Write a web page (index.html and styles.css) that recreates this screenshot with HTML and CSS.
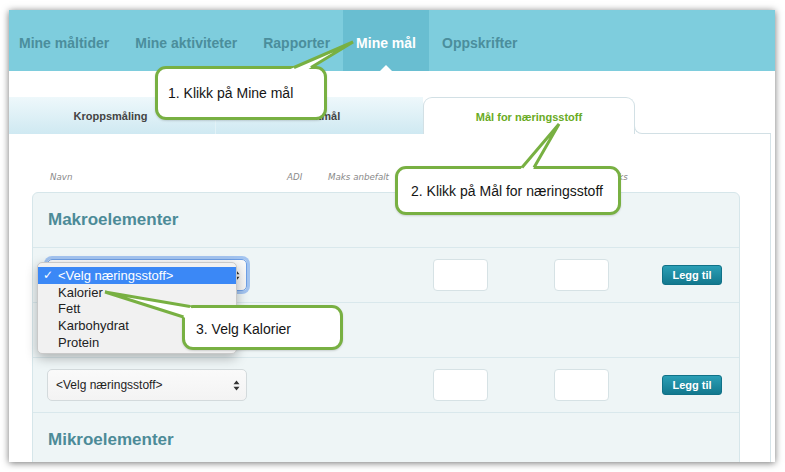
FILE: index.html
```html
<!DOCTYPE html>
<html lang="no">
<head>
<meta charset="utf-8">
<title>Mine mål – Mål for næringsstoff</title>
<link rel="stylesheet" href="styles.css">
</head>
<body>
<div class="window">
  <nav class="topnav">
    <a class="nav-item first">Mine måltider</a>
    <a class="nav-item">Mine aktiviteter</a>
    <a class="nav-item">Rapporter</a>
    <a class="nav-item active">Mine mål</a>
    <a class="nav-item">Oppskrifter</a>
  </nav>

  <div class="tabs">
    <div class="tab tab-first">Kroppsmåling</div>
    <div class="tab tab-second">Vektmål</div>
    <div class="tab tab-active">Mål for næringsstoff</div>
    <div class="tab-rest"></div>
  </div>

  <div class="content">
    <div class="col-heads">
      <span class="ch ch-name">Navn</span>
      <span class="ch ch-adi">ADI</span>
      <span class="ch ch-maxrec">Maks anbefalt</span>
      <span class="ch ch-min">Min</span>
      <span class="ch ch-max">Maks</span>
    </div>

    <div class="panel">
      <h2 class="group-title">Makroelementer</h2>

      <div class="row">
        <div class="picker focused">
          <span class="picker-label">&lt;Velg næringsstoff&gt;</span>
          <svg class="picker-arrows" width="7" height="11" viewBox="0 0 7 11"><path d="M3.5 0.5 L6.5 4.3 H0.5 Z M3.5 10.5 L6.5 6.7 H0.5 Z" fill="#333"/></svg>
        </div>
        <div class="num num-min"></div>
        <div class="num num-max"></div>
        <button class="add">Legg til</button>
      </div>

      <div class="row"></div>

      <div class="row">
        <div class="picker">
          <span class="picker-label">&lt;Velg næringsstoff&gt;</span>
          <svg class="picker-arrows" width="7" height="11" viewBox="0 0 7 11"><path d="M3.5 0.5 L6.5 4.3 H0.5 Z M3.5 10.5 L6.5 6.7 H0.5 Z" fill="#333"/></svg>
        </div>
        <div class="num num-min"></div>
        <div class="num num-max"></div>
        <button class="add">Legg til</button>
      </div>

      <h2 class="group-title group-next">Mikroelementer</h2>
    </div>
  </div>
</div>

<ul class="dropdown">
  <li class="option selected"><span class="check">✓</span><span class="opt-label">&lt;Velg næringsstoff&gt;</span></li>
  <li class="option"><span class="opt-label">Kalorier</span></li>
  <li class="option"><span class="opt-label">Fett</span></li>
  <li class="option"><span class="opt-label">Karbohydrat</span></li>
  <li class="option"><span class="opt-label">Protein</span></li>
</ul>

<div class="callout callout-1">1. Klikk på Mine mål</div>
<div class="callout callout-2">2. Klikk på Mål for næringsstoff</div>
<div class="callout callout-3">3. Velg Kalorier</div>

<svg class="tails" width="785" height="472" viewBox="0 0 785 472">
  <!-- pointer of step 1 -->
  <polygon points="353,42 285.9,71 305.2,71" fill="#fff"/>
  <polyline points="294,67.5 353,42 311,67.5" fill="none" stroke="#78b042" stroke-width="3" stroke-linejoin="miter"/>
  <!-- pointer of step 2 -->
  <polygon points="559,124 519,171 532,171" fill="#fff"/>
  <polyline points="522,167.5 559,124 534,167.5" fill="none" stroke="#78b042" stroke-width="3" stroke-linejoin="miter"/>
  <!-- pointer of step 3 -->
  <polygon points="105,292 190,306.5 195,312 189,320 183.5,317" fill="#fff"/>
  <polyline points="190,306.5 105,292 183.5,317" fill="none" stroke="#78b042" stroke-width="3" stroke-linejoin="miter"/>
</svg>
</body>
</html>
```

FILE: styles.css
```css
* {
  box-sizing: border-box;
}

html, body {
  margin: 0;
  padding: 0;
  background: #ffffff;
}

body {
  position: relative;
  width: 785px;
  height: 472px;
  overflow: hidden;
  font-family: "Liberation Sans", Arial, sans-serif;
}

/* framed browser window */
.window {
  margin: 10px 0 0 9px;
  width: 766px;
  height: 452px;
  overflow: hidden;
  background: #ffffff;
  box-shadow: 0 1px 7px rgba(0, 0, 0, 0.55);
  display: flex;
  flex-direction: column;
}

/* top navigation */
.topnav {
  height: 61px;
  flex: none;
  display: flex;
  background: #7ecddd;
}

.nav-item {
  position: relative;
  display: flex;
  align-items: center;
  padding: 5px 13px 0;
  font-size: 14px;
  font-weight: bold;
  color: #4b8e9c;
  white-space: nowrap;
}

.nav-item.first {
  padding-left: 10px;
}

.nav-item.active {
  background: #69bed1;
  color: #ffffff;
  padding-left: 13px;
  padding-right: 13px;
}

.nav-item.active::after {
  content: "";
  position: absolute;
  left: 50%;
  bottom: 0;
  margin-left: -6px;
  border-left: 6px solid transparent;
  border-right: 6px solid transparent;
  border-bottom: 6px solid #ffffff;
}

/* sub tabs */
.tabs {
  display: flex;
  height: 37px;
  margin-top: 26px;
  flex: none;
}

.tab {
  display: flex;
  align-items: center;
  justify-content: center;
  font-size: 11px;
  font-weight: bold;
  color: #444444;
  white-space: nowrap;
}

.tab-first,
.tab-second {
  background: linear-gradient(#eef8fb, #cfe9f2);
}

.tab-first {
  width: 206px;
  padding-right: 3px;
}

.tab-second {
  width: 208px;
  border-left: 1px solid #e2f2f7;
  border-top-left-radius: 8px;
}

.tab-active {
  width: 212px;
  background: #ffffff;
  color: #6aab24;
  border: 1px solid #d2e0e5;
  border-bottom: none;
  border-radius: 9px 9px 0 0;
  padding-top: 1px;
}

.tab-rest {
  flex: 1;
  align-self: flex-end;
  height: 10px;
  margin-left: -1px;
  margin-right: 4px;
  border-left: 1px solid #d2e0e5;
  border-bottom: 1px solid #d2e0e5;
  border-bottom-left-radius: 8px;
}

/* goal table */
.content {
  flex: 1;
  margin-right: 4px;
  border-right: 1px solid #d5e3e8;
  padding-top: 37px;
}

.col-heads {
  display: flex;
  height: 12px;
  line-height: 12px;
  padding-left: 41px;
  font-family: "DejaVu Sans", Verdana, sans-serif;
  font-style: italic;
  font-size: 8.7px;
  color: #8a8a8a;
}

.ch-name { width: 237px; }
.ch-adi { width: 41px; }
.ch-maxrec { width: 120px; }
.ch-min { width: 157.5px; }

.panel {
  margin: 9px 0 0 23px;
  width: 708px;
  background: #eef5f6;
  border: 1px solid #d6e6ea;
  border-radius: 6px;
}

.group-title {
  margin: 0;
  height: 54px;
  display: flex;
  align-items: center;
  padding-left: 15px;
  font-size: 17px;
  font-weight: bold;
  color: #4c8b98;
}

.group-next {
  height: 55px;
  border-top: 1px solid #d9e8ec;
}

.row {
  height: 55px;
  border-top: 1px solid #d9e8ec;
  display: flex;
  align-items: center;
  padding-left: 14px;
}

.picker {
  width: 200px;
  height: 32px;
  display: flex;
  align-items: center;
  justify-content: space-between;
  padding: 0 6px 0 8px;
  background: linear-gradient(#fafafa, #f3f3f3);
  border: 1px solid #d3dadc;
  border-radius: 5px;
  font-size: 12px;
  color: #1e1e1e;
}

.picker.focused {
  border-color: #6fa0e6;
  box-shadow: 0 0 0 3px #a3c4f0;
}

.num {
  width: 55px;
  height: 32px;
  background: #ffffff;
  border: 1px solid #d6e2e5;
  border-radius: 4px;
}

.num-min { margin-left: 186px; }
.num-max { margin-left: 66px; }

.add {
  margin-left: 53px;
  width: 60px;
  height: 20px;
  padding: 0 0 1px;
  border: 1px solid #107288;
  border-radius: 3px;
  background: linear-gradient(#2b9fb6, #12788e);
  color: #ffffff;
  font-family: "Liberation Sans", Arial, sans-serif;
  font-size: 11px;
  font-weight: bold;
}

/* open option list of the first picker */
.dropdown {
  position: absolute;
  left: 37px;
  top: 262px;
  width: 200px;
  height: 92px;
  margin: 0;
  padding: 4px 0 0;
  list-style: none;
  background: #f1f1f1;
  border: 1px solid #c9c9c9;
  border-radius: 5px;
  box-shadow: 0 4px 12px rgba(0, 0, 0, 0.28);
  font-size: 13px;
  color: #222222;
}

.option {
  display: flex;
  align-items: center;
  height: 16.75px;
  padding-left: 20px;
  white-space: nowrap;
}

.option.selected {
  padding-left: 5px;
  background: #3b88f6;
  color: #ffffff;
}

.check {
  width: 15px;
  flex: none;
  font-family: "DejaVu Sans", sans-serif;
  font-size: 12px;
  font-weight: bold;
}

/* instruction callouts */
.callout {
  position: absolute;
  display: flex;
  align-items: center;
  background: #ffffff;
  border: 3px solid #78b042;
  border-radius: 11px;
  font-size: 14px;
  color: #151515;
  white-space: nowrap;
  box-shadow: 0 1px 2px rgba(0, 0, 0, 0.15);
}

.callout-1 {
  left: 155px;
  top: 66px;
  width: 172px;
  height: 54px;
  padding-left: 10px;
}

.callout-2 {
  left: 395px;
  top: 166px;
  width: 226px;
  height: 49px;
  padding-left: 13px;
}

.callout-3 {
  left: 182px;
  top: 305px;
  width: 161px;
  height: 45px;
  padding: 3px 0 0 11px;
}

.tails {
  position: absolute;
  left: 0;
  top: 0;
  pointer-events: none;
}
```
